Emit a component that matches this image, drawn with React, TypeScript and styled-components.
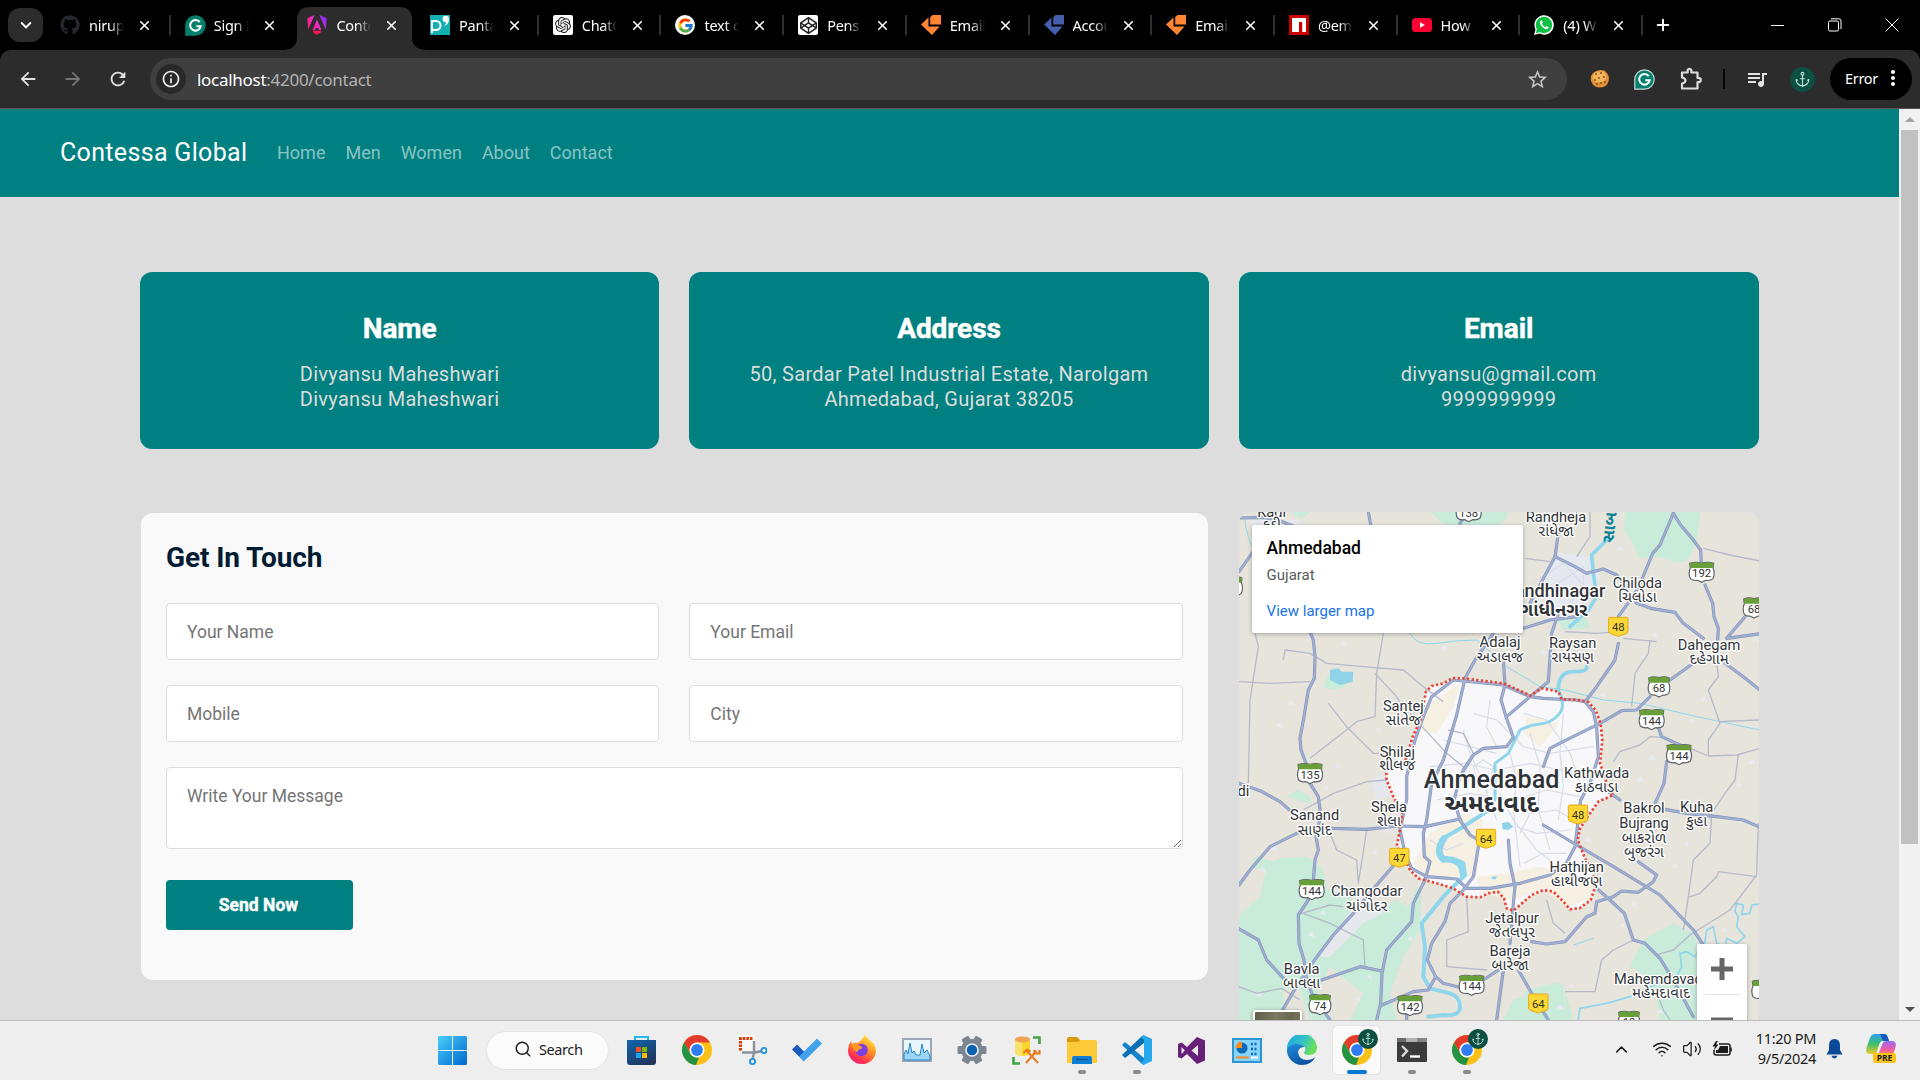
import React from "react";
import styled, { createGlobalStyle, css } from "styled-components";
import { FaGithub, FaWhatsapp, FaCodepen } from "react-icons/fa";
import { FcGoogle } from "react-icons/fc";
import { SiOpenai } from "react-icons/si";
import {
  MdArrowBack,
  MdArrowForward,
  MdRefresh,
  MdStarBorder,
  MdQueueMusic,
  MdInfoOutline,
  MdMoreVert,
  MdKeyboardArrowDown,
} from "react-icons/md";
import { Anchor, ChevronUp, Search, Volume2, Wifi, Plus, X } from "lucide-react";

const UI = `"Noto Sans", "Open Sans", sans-serif`;
const BODY = `Roboto, "Liberation Sans", sans-serif`;

const GlobalStyle = createGlobalStyle`
  *, *::before, *::after { box-sizing: border-box; }
  html, body { margin: 0; padding: 0; overflow: hidden; background: #000; }
  body { font-family: ${BODY}; }
  h1, h2, p { margin: 0; }
  svg { display: block; flex: none; }
`;

const Screen = styled.div`
  width: 1920px;
  height: 1080px;
  display: flex;
  flex-direction: column;
  overflow: hidden;
`;

/* ---------- browser tab strip ---------- */

const TabStrip = styled.div`
  height: 50px;
  flex: none;
  background: #000;
  display: flex;
  align-items: center;
  padding-left: 8px;
  color: #fff;
  font-family: ${UI};
`;

const TabSearch = styled.button`
  width: 35px;
  height: 34px;
  border: 0;
  padding: 0;
  border-radius: 12px;
  background: #2c2c2c;
  color: #fff;
  display: grid;
  place-items: center;
  margin-right: 6px;
`;

const TabBox = styled.div<{ $sep?: boolean }>`
  width: 122.7px;
  height: 50px;
  flex: none;
  display: flex;
  align-items: center;
  padding-left: 13px;
  position: relative;
  &:first-of-type {
    padding-left: 11px;
  }
  ${(p) =>
    p.$sep &&
    css`
      &::after {
        content: "";
        position: absolute;
        right: 1px;
        top: 15px;
        width: 2px;
        height: 20px;
        background: #303030;
      }
    `}
`;

const ActiveShape = styled.svg`
  position: absolute;
  left: -12px;
  top: 7px;
`;

const TabIcon = styled.span`
  width: 20px;
  height: 20px;
  flex: none;
  position: relative;
  display: grid;
  place-items: center;
`;

const TabTitle = styled.span`
  width: 35px;
  margin-left: 9px;
  margin-right: 13px;
  font-size: 14.5px;
  letter-spacing: -0.25px;
  white-space: nowrap;
  overflow: hidden;
  position: relative;
  mask-image: linear-gradient(90deg, #000 60%, transparent 100%);
`;

const TabClose = styled.span`
  position: relative;
  display: grid;
`;

const WindowButtons = styled.div`
  margin-left: auto;
  display: flex;
`;

const WindowButton = styled.span`
  width: 57px;
  height: 50px;
  display: grid;
  place-items: center;
`;

const NewTab = styled.span`
  margin-left: 10px;
`;

/* ---------- toolbar ---------- */

const ToolbarWrap = styled.div`
  background: #000;
  height: 59px;
  flex: none;
`;

const Toolbar = styled.div`
  height: 59px;
  background: #2c2c2c;
  border-radius: 11px 11px 0 0;
  border-bottom: 1px solid #565656;
  display: flex;
  align-items: center;
  font-family: ${UI};
  color: #e3e3e3;
`;

const NavButtons = styled.div`
  width: 150px;
  padding-left: 17px;
  display: flex;
  gap: 23px;
`;

const Omnibox = styled.div`
  width: 1417px;
  height: 42px;
  border-radius: 21px;
  background: #3f3f3f;
  display: flex;
  align-items: center;
  padding: 0 18px 0 6px;
`;

const SiteInfo = styled.span`
  width: 30px;
  height: 30px;
  border-radius: 50%;
  background: #292929;
  display: grid;
  place-items: center;
  color: #f1f1f1;
`;

const Url = styled.span`
  flex: 1;
  margin-left: 11px;
  font-size: 17px;
  letter-spacing: -0.28px;
  color: #b4b4b4;
  b { font-weight: 400; color: #fff; }
`;

const Extensions = styled.div`
  margin-left: 23px;
  display: flex;
  align-items: center;
`;

const ExtSlot = styled.span<{ $gap: number }>`
  margin-right: ${(p) => p.$gap}px;
`;

const Divider = styled.span`
  width: 2px;
  height: 20px;
  margin-right: 20px;
  background: #050505;
`;

const Avatar = styled.span<{ $size: number }>`
  width: ${(p) => p.$size}px;
  height: ${(p) => p.$size}px;
  border-radius: 50%;
  background: #0d4f42;
  color: #b9e2d8;
  display: grid;
  place-items: center;
`;

const ErrorChip = styled.div`
  margin-left: auto;
  margin-right: 8px;
  width: 82px;
  height: 42px;
  border-radius: 21px;
  background: #000;
  color: #fff;
  font-size: 14.5px;
  letter-spacing: -0.3px;
  display: flex;
  align-items: center;
  justify-content: space-between;
  padding: 0 7px 2px 15px;
`;

/* ---------- page ---------- */

const Viewport = styled.div`
  height: 911px;
  flex: none;
  display: flex;
  overflow: hidden;
`;

const Page = styled.div`
  width: 1899px;
  background: #ddd;
  overflow: hidden;
`;

const Navbar = styled.nav`
  height: 88px;
  background: #008080;
  display: flex;
  align-items: center;
  padding: 0 0 2px 60px;
`;

const Brand = styled.span`
  color: #fff;
  font-size: 25px;
  width: 217px;
  letter-spacing: 0.33px;
`;

const NavLink = styled.a`
  color: rgba(255, 255, 255, 0.55);
  font-size: 18px;
  margin-right: 20px;
`;

const Content = styled.main`
  padding: 75px 140px 0 140px;
  display: grid;
  grid-template-columns: 519.3px 519.3px 520px;
  column-gap: 30px;
  row-gap: 63px;
`;

const InfoCard = styled.section`
  height: 177px;
  border-radius: 12px;
  background: #008080;
  color: #ddd;
  text-align: center;
  padding-top: 39px;
  font-size: 20px;
  line-height: 25px;
  letter-spacing: 0.3px;
`;

const CardTitle = styled.h2`
  color: #fff;
  font-size: 28px;
  line-height: 36px;
  font-weight: 700;
  letter-spacing: -0.1px;
  -webkit-text-stroke: 0.5px #fff;
  margin-bottom: 15px;
`;

const FormCard = styled.form`
  grid-column: span 2;
  margin: 1px 1px 0 1px;
  height: 467px;
  border-radius: 12px;
  background: #f9f9f9;
  padding: 26px 25px 0;
`;

const FormTitle = styled.h1`
  color: #011b33;
  font-size: 28px;
  line-height: 38px;
  font-weight: 700;
  letter-spacing: -0.1px;
  margin-bottom: 26px;
`;

const Fields = styled.div`
  display: grid;
  grid-template-columns: 1fr 1fr;
  gap: 25px 30px;
`;

const fieldStyle = css`
  width: 100%;
  border: 1px solid #ddd;
  border-radius: 4px;
  background: #fff;
  font-family: ${BODY};
  font-size: 17.5px;
  padding: 0 20px;
  outline: none;
  &::placeholder { color: #757575; opacity: 1; }
`;

const Input = styled.input`
  ${fieldStyle}
  height: 57px;
`;

const Textarea = styled.textarea`
  ${fieldStyle}
  grid-column: span 2;
  display: block;
  height: 82px;
  padding: 17px 20px;
  line-height: 22px;
`;

const SendButton = styled.button`
  margin-top: 31px;
  width: 187px;
  height: 50px;
  border: 0;
  border-radius: 4px;
  background: #008080;
  color: #fff;
  font-family: ${BODY};
  font-size: 17.5px;
  font-weight: 700;
  -webkit-text-stroke: 0.4px #fff;
  padding: 0 8px 0 6px;
`;

/* ---------- scrollbar ---------- */

const Scrollbar = styled.div`
  width: 21px;
  background: #f1f1f1;
  display: flex;
  flex-direction: column;
  align-items: center;
  justify-content: space-between;
`;

const ScrollThumb = styled.div`
  width: 17px;
  height: 714px;
  background: #c1c1c1;
  margin-bottom: auto;
`;

const ScrollArrow = styled.div<{ $up?: boolean }>`
  width: 21px;
  height: 21px;
  display: grid;
  place-items: center;
  &::before {
    content: "";
    border: 5px solid transparent;
    ${(p) =>
      p.$up
        ? "border-bottom-color:#a3a3a3;border-top:0;"
        : "border-top-color:#505050;border-bottom:0;"}
  }
`;

/* ---------- map ---------- */

const MapFrame = styled.section`
  height: 563px;
  border-radius: 12px;
  overflow: hidden;
  position: relative;
  background: #e7e4dc;
`;

const PlaceCard = styled.div`
  position: absolute;
  left: 13px;
  top: 13px;
  width: 271px;
  height: 108px;
  border-radius: 2px;
  background: #fff;
  box-shadow: 0 1px 4px rgba(0, 0, 0, 0.3);
  padding: 13px 15px;
  display: flex;
  flex-direction: column;
`;

const PlaceName = styled.span`
  font-size: 17.5px;
  line-height: 21px;
  font-weight: 500;
  color: #000;
`;

const PlaceRegion = styled.span`
  font-size: 15px;
  line-height: 18px;
  margin-top: 7px;
  color: #5b5b5b;
`;

const PlaceLink = styled.a`
  font-size: 15px;
  line-height: 18px;
  margin-top: 18px;
  color: #1a73e8;
`;

const ZoomControl = styled.div`
  position: absolute;
  left: 458px;
  top: 432px;
  width: 50px;
  height: 101px;
  border-radius: 2px;
  background: #fff;
  box-shadow: 0 1px 4px rgba(0, 0, 0, 0.3);
  display: grid;
  grid-template-rows: 50px 1px 50px;
  place-items: center;
`;

const ZoomRule = styled.span`
  width: 37px;
  height: 1px;
  background: #e6e6e6;
`;

const SatelliteThumb = styled.div`
  position: absolute;
  left: 14px;
  top: 498px;
  width: 49px;
  height: 49px;
  border: 2px solid #fff;
  border-radius: 3px;
  background: linear-gradient(100deg, #5e5f49, #7b7862 40%, #6a6a50 70%, #7d795f);
  box-shadow: 0 1px 4px rgba(0, 0, 0, 0.4);
`;

/* ---------- taskbar ---------- */

const Taskbar = styled.footer`
  height: 60px;
  flex: none;
  background: #eee;
  border-top: 1px solid #bdbdbd;
  display: flex;
  align-items: center;
  padding: 0 0 1px 438px;
  font-family: ${UI};
  color: #1b1b1b;
`;

const SearchPill = styled.div`
  width: 123px;
  height: 39px;
  margin: 0 5px 0 19px;
  border: 1px solid #e4e4e4;
  border-radius: 20px;
  background: #fbfbfb;
  display: flex;
  align-items: center;
  padding: 0 0 2px 27px;
  gap: 7px;
  font-size: 14.5px;
  letter-spacing: -0.4px;
`;

const AppSlot = styled.div<{ $active?: boolean }>`
  width: 47px;
  height: 48px;
  margin: 0 4px;
  border-radius: 5px;
  display: grid;
  place-items: center;
  position: relative;
  background: ${(p) => (p.$active ? "#fafafa" : "transparent")};
  box-shadow: ${(p) => (p.$active ? "0 0 0 1px #e3e3e3" : "none")};
`;

const RunMark = styled.span<{ $active?: boolean }>`
  position: absolute;
  bottom: 0;
  left: 50%;
  width: ${(p) => (p.$active ? 20 : 8)}px;
  height: 4px;
  border-radius: 2px;
  transform: translateX(-50%);
  background: ${(p) => (p.$active ? "#0078d4" : "#8a8a8a")};
`;

const BadgeAvatar = styled.span`
  position: absolute;
  right: 2px;
  top: 3px;
`;

const Tray = styled.div`
  margin-left: auto;
  display: flex;
  align-items: center;
  padding: 0 24px 2px 0;
`;

const TrayIcons = styled.div`
  display: flex;
  align-items: center;
  gap: 10px;
  margin-left: 21px;
  margin-right: 17px;
`;

const Clock = styled.div`
  width: 67px;
  font-size: 14.5px;
  line-height: 20px;
  letter-spacing: -0.3px;
  white-space: nowrap;
  display: flex;
  flex-direction: column;
  align-items: flex-end;
  padding-bottom: 2px;
`;

const Bell = styled.span`
  margin: 0 23px 0 10px;
`;

/* ---------- drawn icons ---------- */

const AngularIcon = () => (
  <svg width="20" height="20" viewBox="0 0 20 20">
    <defs>
      <linearGradient id="ng" x1="0" y1="0.7" x2="1" y2="0.2">
        <stop offset="0" stopColor="#ff1f77" />
        <stop offset="0.5" stopColor="#f02bd5" />
        <stop offset="1" stopColor="#7a2bff" />
      </linearGradient>
    </defs>
    <path d="M12.4 0 19.6 3.3 18.9 14.4ZM7.6 0 .4 3.3 1.1 14.4ZM10 4.4 14.4 15H11.9L11.2 13H8.8L8.1 15H5.6Z" fill="url(#ng)" />
    <path d="M5.6 15.8H14.4L13.8 17.6 10 19.8 6.2 17.6Z" fill="#ff1857" />
  </svg>
);

const GrammarlyIcon = ({ outlined }: { outlined?: boolean }) => (
  <svg width="21" height="21" viewBox="0 0 21 21">
    <path d="M.8 20.2V10.5A9.7 9.7 0 1 1 10.5 20.2Z" fill="#04806c" stroke={outlined ? "#c9d8d5" : "#04806c"} strokeWidth="1.2" />
    <path d="M14.8 7.2A5.3 5.3 0 1 0 15.7 11.3H11.3" fill="none" stroke="#fff" strokeWidth="2" />
  </svg>
);

const PuzzleIcon = () => (
  <svg width="25" height="25" viewBox="0 0 25 25">
    <path
      d="M4 5.500H9.700Q9 1.800 11.500 1.800T13.300 5.500H19.500V11Q22.800 10.600 22.800 13T19.500 15V21.500H4V16.500Q7.400 15.800 7.400 13.500T4 10.500Z"
      fill="none"
      stroke="#dcdcdc"
      strokeWidth="2.200"
      strokeLinejoin="round"
    />
  </svg>
);

const PantaloonsIcon = () => (
  <svg width="20" height="20" viewBox="0 0 20 20">
    <rect width="20" height="20" fill="#12b0b3" />
    <path d="M2 18V6H6A4.4 4.4 0 0 1 6 15H2" fill="none" stroke="#fff" strokeWidth="2" />
    <circle cx="15.8" cy="4" r="3.2" fill="#fff" />
    <path d="M19 4Q19 9 14.6 11Q17 8 16 5Z" fill="#fff" />
  </svg>
);

const ArrowBlockIcon = ({ color }: { color: string }) => (
  <svg width="20" height="20" viewBox="0 0 20 20" fill={color}>
    <path d="M0 9.500 7.500 2.500V11.500H18.500L11 20Z" />
    <path d="M11.500 0H20V9.500H9.200V2.200Z" />
  </svg>
);

const NpmIcon = () => (
  <svg width="20" height="20" viewBox="0 0 20 20">
    <rect width="20" height="20" fill="#cb0000" />
    <path d="M3 3H17V17H13.2V7H10V17H3Z" fill="#fff" />
  </svg>
);

const WhiteTile = styled.span<{ $round?: boolean }>`
  width: 20px;
  height: 20px;
  border-radius: ${(p) => (p.$round ? "50%" : "2px")};
  background: #fff;
  color: #222;
  display: grid;
  place-items: center;
`;

const WhatsAppIcon = () => (
  <svg width="20" height="20" viewBox="0 0 20 20">
    <path d="M0 20 1.500 14.500A9.700 9.700 0 1 1 5.500 18.500Z" fill="#fff" />
    <path d="M1.800 18.200 2.900 14.200A8.200 8.200 0 1 1 5.900 17.100Z" fill="#10c043" />
    <path d="M7.300 5.300Q5.500 6 5.900 8.200 7.800 12.900 12.200 14.200 14.300 14.200 14.800 12.200L12.500 11 11.400 12.200Q8.900 11.100 8 8.800L8.900 7.700 8.100 5.400Z" fill="#fff" />
  </svg>
);

const YouTubeMark = () => (
  <svg width="20" height="20" viewBox="0 0 20 20">
    <rect y="3" width="20" height="14" rx="3.5" fill="#ff0033" />
    <path d="M8 7.2 13 10 8 12.8Z" fill="#fff" />
  </svg>
);

const CookieIcon = () => (
  <svg width="20" height="20" viewBox="0 0 20 20">
    <path d="M3 4Q9-1 15 2Q20 6 18.6 12Q17 18 10.5 18.6Q3 18.6 1 12Q0 7 3 4Z" fill="#e08f35" />
    <path d="M4 4Q9 1 14 3Q17 6 16 10Q12 15 5 13Q1 9 4 4Z" fill="#f2b45c" />
    {[[6, 5], [11, 4], [14, 8], [9, 9], [5, 11], [11, 14], [15, 13], [7, 15]].map(([x, y]) => (
      <circle key={`${x}-${y}`} cx={x} cy={y} r="0.9" fill="#7d4518" />
    ))}
  </svg>
);

const ChromeIcon = () => (
  <svg width="30" height="30" viewBox="0 0 30 30">
    <circle cx="15" cy="15" r="15" fill="#fbc116" />
    <path d="M15 0A15 15 0 0 1 28 7.5H15A7.5 7.5 0 0 0 8.5 18.7L2 7.5A15 15 0 0 1 15 0Z" fill="#e33b2e" />
    <path d="M2 7.5 8.5 18.8A7.5 7.5 0 0 0 17 22.2L14 30A15 15 0 0 1 2 7.5Z" fill="#229342" />
    <circle cx="15" cy="15" r="7.5" fill="#fff" />
    <circle cx="15" cy="15" r="5.9" fill="#2f7df0" />
  </svg>
);

const WindowsIcon = () => (
  <svg width="29" height="29" viewBox="0 0 29 29">
    <defs>
      <linearGradient id="win" x1="0" y1="0" x2="1" y2="1">
        <stop offset="0" stopColor="#48cffb" />
        <stop offset="1" stopColor="#0067ce" />
      </linearGradient>
    </defs>
    <path d="M1 0H14V14H0V1ZM15 0H28L29 1V14H15ZM0 15H14V29H1L0 28ZM15 15H29V28L28 29H15Z" fill="url(#win)" />
  </svg>
);

const StoreIcon = () => (
  <svg width="29" height="29" viewBox="0 0 29 29">
    <defs>
      <linearGradient id="store" x1="0" y1="0" x2="0.6" y2="1">
        <stop offset="0" stopColor="#0f66ad" />
        <stop offset="1" stopColor="#21365f" />
      </linearGradient>
    </defs>
    <path d="M8 6V1H21V6" fill="none" stroke="#22b8ee" strokeWidth="2" />
    <path d="M0 4H29V26Q29 29 26 29H3Q0 29 0 26Z" fill="url(#store)" />
    <path d="M9 11H14V16H9Z" fill="#f25022" />
    <path d="M15 11H20V16H15Z" fill="#7fba00" />
    <path d="M9 17H14V22H9Z" fill="#19a5f0" />
    <path d="M15 17H20V22H15Z" fill="#ffb900" />
  </svg>
);

const SnipIcon = () => (
  <svg width="30" height="30" viewBox="0 0 30 30" fill="none">
    <path d="M0 0H18V18H4Z" fill="#f8f8f8" />
    <path d="M15.500 3.500H3.500V15.500" stroke="#d83b01" strokeWidth="3" strokeDasharray="2.6 1" />
    <path d="M17 6V18L15.500 24M5 17.500H18L25 16" stroke="#8b9299" strokeWidth="2.4" />
    <circle cx="27" cy="15.5" r="2.6" stroke="#1b93e0" strokeWidth="1.8" />
    <circle cx="15.5" cy="26.5" r="2.6" stroke="#1b93e0" strokeWidth="1.8" />
  </svg>
);

const TodoIcon = () => (
  <svg width="30" height="30" viewBox="0 0 30 30">
    <path d="M0 14.5 5 9.5 13 17.5 11.5 26Z" fill="#185abd" />
    <path d="M7 21.5 25 3.5 30 8.5 11.8 26.5Z" fill="#41a2ec" />
  </svg>
);

const FirefoxIcon = () => (
  <svg width="30" height="30" viewBox="0 0 30 30">
    <defs>
      <linearGradient id="ff" x1="0.8" y1="0" x2="0.2" y2="1">
        <stop offset="0" stopColor="#fff14a" />
        <stop offset="0.45" stopColor="#ff8a1f" />
        <stop offset="0.8" stopColor="#ff2f55" />
        <stop offset="1" stopColor="#e81f8d" />
      </linearGradient>
    </defs>
    <path d="M18 0Q21 4 25 7L27 9Q29 13 29 16A14 13.5 0 1 1 1 15Q1 10 4 6L5 9Q8 7 11 8Q15 5 18 0Z" fill="url(#ff)" />
    <circle cx="14.5" cy="15" r="6.2" fill="#7a3fe0" />
    <path d="M4 10Q9 7 13 11Q17 12 14 14Q10 14 11 17Q7 17 4 10Z" fill="#ff9a1f" />
  </svg>
);

const MonitorIcon = () => (
  <svg width="30" height="24" viewBox="0 0 30 24">
    <rect x="1" y="1" width="28" height="22" fill="#eaf5fc" stroke="#9aa9b5" strokeWidth="2" />
    <path d="M2 16 4 12 6 16 8 5 10 15 12 13 14 17 18 17 20 6 22 15 25 12 28 18V22H2Z" fill="#9bd5f7" stroke="#2b86c5" />
  </svg>
);

const GearIcon = () => (
  <svg width="30" height="30" viewBox="0 0 30 30">
    <g fill="#7c8690">
      <circle cx="15" cy="15" r="11" />
      {[0, 60, 120, 180, 240, 300].map((a) => (
        <rect key={a} x="11" y="0.5" width="8" height="7" rx="1.5" transform={`rotate(${a + 30} 15 15)`} />
      ))}
    </g>
    <circle cx="15" cy="15" r="6.8" fill="#e9eef2" />
    <circle cx="15" cy="15" r="5.2" fill="#0b62b2" />
  </svg>
);

const DbToolIcon = () => (
  <svg width="29" height="29" viewBox="0 0 29 29" fill="none">
    <path d="M3 3H18V18Q11 22 3 18Z" fill="#fbd52b" />
    <path d="M3 3H10V20Q5 20 3 18Z" fill="#f9e36e" />
    <ellipse cx="10.5" cy="3.4" rx="7.5" ry="3" fill="#efa354" />
    <path d="M21 1.5H27.5V8M1.5 21V27.5H8" stroke="#42a547" strokeWidth="2.6" />
    <path d="M14 27 24.500 15M26 27 15 15" stroke="#ea7a1c" strokeWidth="2" />
    <path d="M11.500 17 15 13.500 18.500 15.500M22.500 14V17.500H27.500V14" stroke="#ea7a1c" strokeWidth="2.2" />
  </svg>
);

const FolderIcon = () => (
  <svg width="30" height="27" viewBox="0 0 30 27">
    <path d="M0 2Q0 0 2 0H10L13 3V8H0Z" fill="#dc9a0a" />
    <path d="M0 5H11L14 3H28Q30 3 30 5V26H0Z" fill="#ffca3a" />
    <path d="M5 27V21Q5 19 7 19H23Q25 19 25 21V27Z" fill="#0f7fd4" />
    <path d="M9 22.5H21" stroke="#0a559c" strokeWidth="1.5" />
  </svg>
);

const VsCodeIcon = () => (
  <svg width="30" height="30" viewBox="0 0 30 30">
    <path d="M0 10 3 7 22 23V30L19 28Z" fill="#1183cd" />
    <path d="M0 20 3 23 22 8V0L19 2Z" fill="#0a6fb5" />
    <path d="M21.5 0 30 4V26L21.5 30 19 28 22 25V5L19 2Z" fill="#27a9f0" />
  </svg>
);

const VisualStudioIcon = () => (
  <svg width="27" height="27" viewBox="0 0 27 27" fill="#68217a">
    <path fillRule="evenodd" d="M19 0 27 3.5V23.5L19 27 9 17 3.5 21.5 0 20V7L3.5 5.5 9 10ZM20 8 13.5 13.5 20 19ZM3.5 10V17L6.8 13.5Z" />
  </svg>
);

const ControlPanelIcon = () => (
  <svg width="30" height="25" viewBox="0 0 30 25">
    <rect x="1" y="1" width="28" height="23" fill="#86d3fb" stroke="#2d95cf" strokeWidth="2" />
    <circle cx="10" cy="10" r="5.6" fill="#0f6cbd" />
    <path d="M10 10V3.5A6.5 6.5 0 0 0 3.5 10Z" fill="#f58a1f" />
    <path d="M19 6H25M19 11H25M19 16H25" stroke="#0f6cbd" strokeWidth="2.4" strokeDasharray="2 1.5" />
    <path d="M4 19.5H17" stroke="#f58a1f" strokeWidth="2" />
    <path d="M19 19.5H26" stroke="#fff" strokeWidth="2" />
  </svg>
);

const EdgeIcon = () => (
  <svg width="30" height="30" viewBox="0 0 30 30">
    <defs>
      <linearGradient id="edgeTop" x1="0" y1="0" x2="1" y2="0.4">
        <stop offset="0" stopColor="#1fa4e6" />
        <stop offset="0.6" stopColor="#34c3c4" />
        <stop offset="1" stopColor="#6ae05a" />
      </linearGradient>
      <linearGradient id="edgeBottom" x1="0" y1="0" x2="0.6" y2="1">
        <stop offset="0" stopColor="#1c8fdd" />
        <stop offset="1" stopColor="#0d4fa0" />
      </linearGradient>
    </defs>
    <path d="M0 14A15 15 0 0 1 30 13Q30 20 22 20Q17 20 17 17.5Q19 15 18 12.5Q15 9 10 9Q3 9 0 14Z" fill="url(#edgeTop)" />
    <path d="M0 14Q3 8.5 10 9Q15 9 17.5 12Q12 12 11 17Q12 25 20 25Q25 25 28.5 22Q24 30 15 30A15 15 0 0 1 0 14Z" fill="url(#edgeBottom)" />
  </svg>
);

const TerminalIcon = () => (
  <svg width="30" height="24" viewBox="0 0 30 24" fill="none">
    <rect width="30" height="24" rx="1" fill="#3b3b3b" />
    <path d="M0 4V1L1 0H9V4Z" fill="#6a6a6a" />
    <path d="M9 0H20V4H9Z" fill="#b0b0b0" />
    <path d="M20 0H30V4H20Z" fill="#868686" />
    <path d="M5 8 10 13 5 18.5" stroke="#ddd" strokeWidth="2.4" />
    <path d="M13 18.5H23" stroke="#fff" strokeWidth="2.4" />
  </svg>
);

const BatteryIcon = () => (
  <svg width="20" height="16" viewBox="0 0 20 16">
    <path d="M7 3H16Q18 3 18 5V12Q18 14 16 14H4Q2 14 2 12V9" fill="none" stroke="#1b1b1b" strokeWidth="1.5" />
    <path d="M8 5H16V12H4V9H6Z" fill="#1b1b1b" />
    <path d="M19 6.5V10.5" stroke="#1b1b1b" strokeWidth="1.6" />
    <path d="M4 0 .5 5.5H3L1.8 9.5 6.5 3.6H4L6 0Z" fill="#1b1b1b" />
  </svg>
);

const BellIcon = () => (
  <svg width="17" height="20" viewBox="0 0 17 20" fill="#0b4a99">
    <path d="M8.5 0Q14 .4 14 6.5V11L16.5 15.5H.5L3 11V6.5Q3 .4 8.5 0Z" />
    <path d="M5.5 16.8H11.5Q10.8 19.4 8.5 19.4Q6.2 19.4 5.5 16.8Z" />
  </svg>
);

const CopilotWrap = styled.div`
  position: relative;
  width: 30px;
  height: 30px;
`;

const PreTag = styled.span`
  position: absolute;
  left: 7px;
  top: 19px;
  width: 23px;
  height: 10px;
  border-radius: 2px;
  background: #fcc419;
  font: 700 8.5px/10px ${UI};
  text-align: center;
  color: #222;
`;

const CopilotIcon = () => (
  <CopilotWrap>
    <svg width="30" height="28" viewBox="0 0 30 28">
      <defs>
        <linearGradient id="copA" x1="0" y1="0" x2="0" y2="1">
          <stop offset="0" stopColor="#2b9ff0" />
          <stop offset="0.5" stopColor="#3ec06b" />
          <stop offset="1" stopColor="#f4c82e" />
        </linearGradient>
        <linearGradient id="copB" x1="0" y1="0" x2="0" y2="1">
          <stop offset="0" stopColor="#9a6cf2" />
          <stop offset="0.6" stopColor="#ee5aa8" />
          <stop offset="1" stopColor="#fb8b4d" />
        </linearGradient>
      </defs>
      <path d="M9 0H18Q21 0 22 4L23 7H17Q14 7 13 11L10 20H4Q-1 20 .5 14L4 4Q5.500 0 9 0Z" fill="url(#copA)" />
      <path d="M18 0Q21 0 22 4L23 7H17L14 0Z" fill="#1558c0" />
      <path d="M21 7H26Q31 7 29.500 13L27 21H12L16 11Q17 7 21 7Z" fill="url(#copB)" />
    </svg>
    <PreTag>PRE</PreTag>
  </CopilotWrap>
);

/* ---------- data ---------- */

const tabs: { title: string; icon: React.ReactNode; active?: boolean; noSep?: boolean }[] = [
  { title: "nirupa", icon: <FaGithub size={20} color="#24292e" /> },
  { title: "Sign I", icon: <GrammarlyIcon />, noSep: true },
  { title: "Conte", icon: <AngularIcon />, active: true, noSep: true },
  { title: "Panta", icon: <PantaloonsIcon /> },
  { title: "ChatG", icon: <WhiteTile><SiOpenai size={16} /></WhiteTile> },
  { title: "text c", icon: <WhiteTile $round><FcGoogle size={17} /></WhiteTile> },
  { title: "Pens", icon: <WhiteTile><FaCodepen size={17} /></WhiteTile> },
  { title: "Email", icon: <ArrowBlockIcon color="#ff8534" /> },
  { title: "Accou", icon: <ArrowBlockIcon color="#4460ad" /> },
  { title: "Email", icon: <ArrowBlockIcon color="#ff8534" /> },
  { title: "@em", icon: <NpmIcon /> },
  { title: "How", icon: <YouTubeMark /> },
  { title: "(4) W", icon: <WhatsAppIcon /> },
];

const cards = [
  { title: "Name", lines: ["Divyansu Maheshwari", "Divyansu Maheshwari"] },
  { title: "Address", lines: ["50, Sardar Patel Industrial Estate, Narolgam", "Ahmedabad, Gujarat 38205"] },
  { title: "Email", lines: ["divyansu@gmail.com", "9999999999"] },
];

const ProfileBadge = () => (
  <Avatar $size={20}>
    <Anchor size={14} strokeWidth={1.6} />
  </Avatar>
);

const apps: { icon: React.ReactNode; run?: boolean; active?: boolean; badge?: boolean }[] = [
  { icon: <StoreIcon /> },
  { icon: <ChromeIcon /> },
  { icon: <SnipIcon /> },
  { icon: <TodoIcon /> },
  { icon: <FirefoxIcon /> },
  { icon: <MonitorIcon /> },
  { icon: <GearIcon /> },
  { icon: <DbToolIcon /> },
  { icon: <FolderIcon />, run: true },
  { icon: <VsCodeIcon />, run: true },
  { icon: <VisualStudioIcon /> },
  { icon: <ControlPanelIcon /> },
  { icon: <EdgeIcon /> },
  { icon: <ChromeIcon />, run: true, active: true, badge: true },
  { icon: <TerminalIcon />, run: true },
  { icon: <ChromeIcon />, run: true, badge: true },
];

/* Map geometry is in thirds of a pixel. */
const majorRoads = [
  "27,54 100,52 150,62 230,95",
  "27,215 80,140",
  "415,36 425,90",
  "240,395 250,420 255,470 253,535 235,570 222,650 210,715 213,750 230,795 240,850 265,890 270,930 268,965 258,1010 265,1050 255,1080 250,1140",
  "235,1200 205,1245 207,1330 222,1380 228,1430 245,1480 300,1560",
  "27,1155 60,1110 120,1040 200,1000 255,982 310,985 410,988 500,978 585,980 690,957",
  "27,850 90,872 150,905 190,940",
  "490,1097 440,1155 370,1240 310,1305 250,1385 190,1475 155,1535",
  "710,36 690,70",
  "790,400 735,480 705,535 680,645 640,780 605,850 590,960 580,1000 583,1070 600,1085 585,1140 550,1210 545,1265 470,1350 456,1420 452,1510 440,1560",
  "720,780 690,830 680,870 672,900 690,960 720,1005 745,1020",
  "605,590 670,540 820,555 900,590 940,595 1035,600 1065,605 1090,635 1100,680 1105,770 1080,850 1052,900 1035,1040 1010,1088 960,1125 870,1150 780,1165 710,1165 680,1137 590,1130 545,1105 525,1060 510,990 530,900 530,830 555,720 580,650 605,590",
  "820,480 825,555 813,600 828,650 850,712 830,740 760,745 730,765 700,810",
  "1165,430 1155,480 1100,560 1065,605",
  "985,100 975,170 935,245 900,310",
  "975,170 1035,200 1070,220 1120,207 1160,225 1220,310 1262,325 1335,337 1360,370 1420,415",
  "1330,40 1290,135 1268,160 1235,240 1215,280 1165,350",
  "1330,40 1352,75 1390,120 1412,150 1414,190",
  "1425,255 1448,310 1452,350 1465,385 1463,420",
  "1600,400 1490,415 1545,350",
  "1485,490 1540,530 1590,570",
  "1390,490 1320,540",
  "1260,590 1220,630 1175,632 1110,670 1005,722 960,745 940,800",
  "830,650 900,590 955,545 965,400 985,340",
  "880,385 960,360 1040,350",
  "1280,670 1295,710 1350,735 1380,750",
  "1310,785 1302,850 1275,910",
  "1305,928 1370,940 1460,950 1540,960 1590,982",
  "1135,875 1170,900",
  "940,975 1040,1035 1150,1100 1290,1185 1390,1290 1420,1335",
  "1100,1165 1140,1200 1183,1240 1210,1320 1245,1330 1290,1375 1330,1440 1390,1550",
  "905,1325 950,1332 1005,1325 1070,1250 1095,1240 1100,1205 1150,1190 1175,1173 1225,1177 1270,1145 1280,1125 1225,1085",
  "835,1020 840,1090 855,1160 850,1210 840,1330",
  "745,1040 730,1130 700,1170 660,1210 645,1265 605,1330 592,1380 617,1430 640,1450 700,1465",
  "27,1287 85,1320 110,1380 165,1440",
  "275,1440 390,1400 456,1413",
  "456,1515 550,1475 595,1470 617,1430",
  "820,1410 800,1560",
  "865,1410 905,1480 955,1560",
  "760,1440 820,1400",
  "530,1560 530,1540",
];

const minorRoads = [
  "75,400 85,440 60,600 55,850",
  "27,545 120,550 240,545",
  "160,480 165,450 240,460 290,490 400,500 520,510 580,560 640,605",
  "460,400 440,520 435,650 380,665 330,705 240,775",
  "295,610 350,680 430,760 480,760",
  "435,520 500,590 530,640",
  "220,930 310,880 410,845 470,840",
  "300,1000 320,1050 380,1080 385,1150 410,990",
  "215,1240 300,1215 340,1220",
  "220,1240 300,1270 400,1320 405,1400",
  "27,1460 80,1480 155,1465 210,1500",
  "710,1190 715,1295 650,1320 650,1400 770,1410",
  "885,175 960,185",
  "1080,36 1080,110 1040,170",
  "1420,145 1500,165 1590,183",
  "1260,420 1255,460 1215,520 1205,620",
  "1460,490 1465,530 1435,570 1470,670 1435,720 1435,765",
  "1465,665 1590,660",
  "1380,745 1435,768 1520,765 1590,745",
  "1525,765 1515,840 1485,880 1445,940 1440,1030 1390,1080 1375,1190 1360,1290",
  "1585,970 1580,1125 1500,1230 1380,1305 1330,1350 1285,1363",
  "1580,1130 1465,1115 1460,1130 1410,1180 1375,1192",
  "1210,1320 1150,1350 1115,1380 1095,1475 1005,1475",
  "540,640 650,760 700,800",
  "1180,415 1280,425",
  "655,690 700,700 730,760",
  "1150,785 1170,755 1230,735 1260,710 1295,712",
  "1005,395 1100,400 1165,395",
  "1285,1490 1300,1530 1320,1560",
  "950,1200 970,1270 1005,1300",
];

const streets = [
  "600,800 700,790 800,810 900,790 1080,830",
  "620,900 720,880 850,900 950,870 1050,890",
  "700,690 720,760 760,850 800,960",
  "840,760 860,840 850,930 870,1100",
  "900,700 930,800 925,930 960,1050",
  "1000,640 990,760 1000,860 985,960",
  "600,1020 650,1050 700,1030",
  "730,640 800,660 880,740 960,760 1090,740",
  "640,720 720,740 800,760",
  "880,640 950,660 1020,760 1050,850",
  "860,980 920,1000 1020,990",
  "880,1090 940,1060 1010,1060",
  "730,800 760,780 790,800 780,840 740,840 730,800",
  "810,880 850,960 920,1050 960,1080",
  "840,820 940,830 1010,800",
  "870,1000 900,940 980,930 1030,960",
  "780,600 770,680 800,740",
  "940,280 1060,200 1060,330",
  "910,250 1000,190 1065,260 990,340",
];

const labels: [string, number, number, number, number][] = [
  ["Kadi", 125, 52, 44, 400],
  ["કડી", 125, 90, 45, 400],
  ["Randheja", 978, 67, 44, 400],
  ["રાંધેજા", 978, 109, 45, 400],
  ["Gandhinagar", 972, 292, 54, 500],
  ["ગાંધીનગર", 972, 347, 54, 700],
  ["Adalaj", 810, 442, 44, 400],
  ["અડાલજ", 810, 485, 45, 400],
  ["Raysan", 1028, 443, 44, 400],
  ["રાયસણ", 1028, 487, 45, 400],
  ["Santej", 520, 633, 44, 400],
  ["સાંતેજ", 520, 676, 45, 400],
  ["Shilaj", 502, 770, 44, 400],
  ["શીલજ", 502, 811, 45, 400],
  ["Chiloda", 1222, 264, 44, 400],
  ["ચિલોડા", 1222, 307, 45, 400],
  ["Dahegam", 1437, 450, 44, 400],
  ["દહેગામ", 1437, 493, 45, 400],
  ["Ahmedabad", 785, 864, 75.5, 500],
  ["અમદાવાદ", 785, 937, 75, 700],
  ["Kathwada", 1100, 833, 44, 400],
  ["કાઠવાડા", 1100, 876, 45, 400],
  ["di", 40, 888, 44, 400],
  ["Sanand", 254, 960, 44, 400],
  ["સાણંદ", 254, 1004, 45, 400],
  ["Shela", 477, 935, 44, 400],
  ["શેલા", 477, 979, 45, 400],
  ["Changodar", 410, 1188, 44, 400],
  ["ચાંગોદર", 410, 1233, 45, 400],
  ["Bavla", 215, 1422, 44, 400],
  ["બાવલા", 215, 1464, 45, 400],
  ["Jetalpur", 846, 1270, 44, 400],
  ["જેતલપુર", 846, 1310, 45, 400],
  ["Bareja", 840, 1367, 44, 400],
  ["બારેજા", 840, 1410, 45, 400],
  ["Hathijan", 1040, 1116, 44, 400],
  ["હાથીજણ", 1040, 1159, 45, 400],
  ["Bakrol", 1242, 938, 44, 400],
  ["Bujrang", 1242, 984, 44, 400],
  ["બાકરોળ", 1242, 1028, 45, 400],
  ["બુજરંગ", 1242, 1072, 45, 400],
  ["Kuha", 1400, 935, 44, 400],
  ["કુહા", 1400, 977, 45, 400],
  ["Mahemdavad", 1285, 1453, 44, 400],
  ["મહેમદાવાદ", 1293, 1495, 45, 400],
];

const stateShields: [string, number, number][] = [
  ["138", 716, 36],
  ["135", 240, 822],
  ["144", 245, 1170],
  ["74", 270, 1515],
  ["142", 540, 1518],
  ["144", 725, 1457],
  ["192", 1415, 218],
  ["68", 1572, 325],
  ["68", 1287, 562],
  ["144", 1265, 660],
  ["144", 1347, 765],
  ["10", 1197, 1565],
  ["6", 1598, 1472],
  ["5", 5, 262],
];

const nationalShields: [string, number, number][] = [
  ["48", 1165, 380],
  ["64", 768, 1016],
  ["47", 508, 1073],
  ["64", 925, 1510],
  ["48", 1044, 943],
];

const flecks = Array.from({ length: 70 }, (_, i) => {
  const x = 40 + ((i * 397) % 1540);
  const y = 50 + ((i * 641) % 1500);
  return `M${x} ${y}l${8 + (i % 9)} ${-10 - (i % 7)} ${6 + (i % 5)} ${14 + (i % 6)}z`;
}).join("");

const boundary =
  "M527 780 550 705 570 665 588 575 605 558 640 550 668 534 700 535 820 550 865 570 900 587 935 565 985 575 995 598 1040 599 1075 606 1097 630 1112 672 1117 720 1110 790 1130 850 1150 885 1105 905 1080 940 1050 985 1043 1020 1065 1075 1088 1115 1094 1165 1082 1200 1050 1224 1020 1228 1000 1205 970 1175 940 1170 905 1185 870 1215 850 1232 830 1225 822 1195 803 1175 775 1180 750 1192 710 1190 670 1165 620 1150 565 1135 540 1110 525 1075 500 1040 510 990 517 940 490 890 470 840 468 800Z";

const CityMap = () => (
  <svg width="520" height="508" viewBox="27 36 1560 1524" fontFamily='Roboto, "Noto Sans Gujarati", "Noto Sans", sans-serif'>
    <rect x="27" y="36" width="1560" height="1524" fill="#e7e4dc" />
    <g fill="#c9ebda">
      <path d="M1185 36H1410L1400 120 1375 180 1340 188 1290 170 1225 175 1210 130 1180 90Z" />
      <path d="M600 36H835L830 55 780 90 700 100 640 70Z" />
      <path d="M185 36H240L215 58Z" />
      <path d="M27 1245 90 1190 110 1100 150 1075 230 1070 280 1110 290 1170 350 1180 390 1230 440 1240 500 1200 535 1220 560 1160 580 1200 575 1290 600 1400 590 1560 27 1560Z" />
      <path d="M1200 1400 1240 1320 1330 1270 1385 1300 1410 1340 1420 1560 1290 1560 1270 1440Z" />
      <path d="M800 1560 840 1500 880 1490 900 1430 1000 1455 1005 1560Z" />
      <path d="M280 560 300 515 365 520 345 560 310 570Z" />
      <path d="M170 890 200 870 240 890 245 910 220 905Z" />
      <path d="M980 360 1070 355 1080 385 1000 390Z" />
      <path d="M75 1070 140 1085 130 1115 60 1100Z" />
      <path d="M1005 1470V1560H1030Z" />
    </g>
    <path d="M560 1150 575 1190 570 1290 520 1370 480 1480 500 1560H820L860 1480 1005 1440 1000 1240 700 1180Z" fill="#e7e4dc" />
    <path d="M300 1400 400 1480 360 1560H300L255 1500ZM160 1465 210 1470 240 1560H160Z" fill="#e7e4dc" />
    <path d="M940 220 990 160 1080 170 1110 230 1060 330 980 350 925 310Z" fill="#e6e8ef" />
    <path d="M60 60 220 60 200 100 80 100ZM420 840 470 820 500 880 440 900ZM380 1210 430 1200 460 1240 400 1270 300 1370 260 1370Z" fill="#e6e8ee" />
    <path d={flecks} fill="#e8eaf1" />
    <path d={boundary} fill="#f8f8fa" />
    <path d="M600 610 690 550 670 620 620 700 570 690ZM890 650 990 670 930 740 880 700ZM700 940 760 960 740 1130 590 1130 550 1090 600 1000ZM740 1130 830 1120 930 1100 1090 1140 1080 1200 1010 1220 940 1165 850 1200 750 1180Z" fill="#f6f0e3" />
    <g fill="none" stroke="#d9dce6" strokeWidth="3.500">
      {streets.map((p) => (
        <polyline key={p} points={p} />
      ))}
    </g>
    <g fill="none" stroke="#8fd6ec" strokeLinejoin="round" strokeLinecap="round">
      <path d="M540 400Q560 440 620 430T740 420L830 500 930 560 1005 570 1120 600 1230 610 1400 650 1590 690M45 60Q50 110 70 150" strokeWidth="3" />
      <path d="M1130 120 1085 165 1090 220 1100 290 1075 330 1020 380M985 570Q985 515 1030 515T1070 500" strokeWidth="11" />
      <path d="M985 570Q1010 620 985 645T930 672T870 690L835 760 795 790 795 900" strokeWidth="9" />
      <path d="M770 935 700 980 640 1015Q610 1050 640 1078Q675 1075 700 1090L705 1125 640 1190 575 1270 585 1340 580 1430 600 1465 660 1480Q690 1490 690 1520T640 1545L595 1550" strokeWidth="12" />
      <path d="M642 1015Q615 1055 640 1078Q680 1075 695 1100L700 1125" strokeWidth="20" />
      <path
        d="M1590 1212 1565 1215 1560 1240 1535 1243 1540 1215 1520 1210 1515 1235 1525 1250 1520 1280 1545 1310 1520 1330 1490 1315 1485 1345 1460 1330 1450 1280 1430 1290 1425 1325 1395 1370 1370 1355 1350 1360 1355 1400 1340 1430 1260 1460 1200 1490 1130 1510 1050 1525 1045 1560"
        strokeWidth="5"
      />
      <path d="M1030 1335 1090 1315" strokeWidth="3" />
    </g>
    <path d="M300 510 325 505 335 515 370 515 368 545 330 555 300 540ZM815 970 835 965 850 980 835 990 818 988ZM785 1130 800 1128 798 1138 785 1137Z" fill="#8fd3e8" />
    <g fill="none" stroke="#b5bacb" strokeWidth="4" strokeLinejoin="round">
      {minorRoads.map((p) => (
        <polyline key={p} points={p} />
      ))}
    </g>
    <g fill="none" strokeLinejoin="round" strokeLinecap="round">
      {majorRoads.map((p) => (
        <polyline key={p} points={p} stroke="#8595bc" strokeWidth="9.500" />
      ))}
      {majorRoads.map((p) => (
        <polyline key={p} points={p} stroke="#a1afd2" strokeWidth="5.500" />
      ))}
    </g>
    <path d={boundary} fill="none" stroke="#ea4335" strokeWidth="8" strokeDasharray="7 7" />
    {labels.map(([text, x, y, size, weight]) => (
      <text
        key={`${text}${y}`}
        x={x}
        y={y}
        fontSize={size}
        fontWeight={weight}
        textAnchor="middle"
        fill="#2f3338"
        stroke="#fff"
        strokeWidth="8"
        strokeLinejoin="round"
        paintOrder="stroke"
      >
        {text}
      </text>
    ))}
    <text transform="translate(1150 130) rotate(-84)" fontSize="50" fontWeight="700" fill="#0b8296">
      સાબરમતી
    </text>
    {stateShields.map(([n, x, y]) => {
      const w = n.length > 2 ? 38 : 33;
      return (
        <g key={`${n}-${x}`} transform={`translate(${x} ${y})`}>
          <path
            d={`M${-w + 2} -28Q${-w / 2} -34 0 -29Q${w / 2} -34 ${w - 2} -28L${w - 4} -14Q${w + 3} 2 ${w - 4} 18Q${w - 12} 25 12 23L0 29 -12 23Q${-w + 12} 25 ${-w + 4} 18Q${-w - 3} 2 ${-w + 4} -14Z`}
            fill="#fff"
            stroke="#5c6166"
            strokeWidth="3.500"
          />
          <path d={`M${-w + 2} -28Q${-w / 2} -33 0 -29Q${w / 2} -33 ${w - 2} -28L${w - 4} -14H${-w + 4}Z`} fill="#689f38" />
          <text y="14" fontSize="34" textAnchor="middle" fill="#333">
            {n}
          </text>
        </g>
      );
    })}
    {nationalShields.map(([n, x, y]) => (
      <g key={`${n}-${x}`} transform={`translate(${x} ${y})`}>
        <path d="M-29 -24Q-29 -28 -25 -28H25Q29 -28 29 -24V14Q29 19 24 21L0 29 -24 21Q-29 19 -29 14Z" fill="#fdd835" stroke="#e2a91a" strokeWidth="3" />
        <text y="13" fontSize="34" textAnchor="middle" fill="#333">
          {n}
        </text>
      </g>
    ))}
  </svg>
);

const AppMap = () => (
  <MapFrame>
    <CityMap />
    <PlaceCard>
      <PlaceName>Ahmedabad</PlaceName>
      <PlaceRegion>Gujarat</PlaceRegion>
      <PlaceLink>View larger map</PlaceLink>
    </PlaceCard>
    <SatelliteThumb />
    <ZoomControl>
      <svg width="22" height="22" viewBox="0 0 22 22">
        <path d="M0 11H22M11 0V22" stroke="#666" strokeWidth="5" />
      </svg>
      <ZoomRule />
      <svg width="22" height="22" viewBox="0 0 22 22">
        <path d="M0 11H22" stroke="#666" strokeWidth="5" />
      </svg>
    </ZoomControl>
  </MapFrame>
);

export default function App() {
  return (
    <Screen>
      <GlobalStyle />
      <TabStrip>
        <TabSearch>
          <MdKeyboardArrowDown size={22} />
        </TabSearch>
        {tabs.map((t, i) => (
          <TabBox key={i} $sep={!t.noSep}>
            {t.active && (
              <ActiveShape width="146" height="43" viewBox="0 0 146 43">
                <path d="M0 43Q15 43 15 30V13Q15 0 28 0H117Q130 0 130 13V30Q130 43 146 43Z" fill="#2c2c2c" />
              </ActiveShape>
            )}
            <TabIcon>{t.icon}</TabIcon>
            <TabTitle>{t.title}</TabTitle>
            <TabClose>
              <X size={15} strokeWidth={2.6} />
            </TabClose>
          </TabBox>
        ))}
        <NewTab>
          <Plus size={18} strokeWidth={2.6} />
        </NewTab>
        <WindowButtons>
          <WindowButton>
            <svg width="13" height="13" viewBox="0 0 13 13">
              <path d="M0 6.500H13" stroke="#fff" />
            </svg>
          </WindowButton>
          <WindowButton>
            <svg width="14" height="14" viewBox="0 0 14 14" fill="none" stroke="#fff">
              <rect x="0.500" y="3" width="10" height="10" rx="1.500" />
              <path d="M3 .8H11Q13 .8 13 3V11" />
            </svg>
          </WindowButton>
          <WindowButton>
            <svg width="14" height="14" viewBox="0 0 14 14">
              <path d="M.5.5 13.500 13.500M13.500.5.5 13.500" stroke="#fff" />
            </svg>
          </WindowButton>
        </WindowButtons>
      </TabStrip>

      <ToolbarWrap>
        <Toolbar>
          <NavButtons>
            <MdArrowBack size={22} />
            <MdArrowForward size={22} color="#757575" />
            <MdRefresh size={22} />
          </NavButtons>
          <Omnibox>
            <SiteInfo>
              <MdInfoOutline size={20} />
            </SiteInfo>
            <Url>
              <b>localhost</b>:4200/contact
            </Url>
            <MdStarBorder size={23} color="#c7c7c7" />
          </Omnibox>
          <Extensions>
            <ExtSlot $gap={24}>
              <CookieIcon />
            </ExtSlot>
            <ExtSlot $gap={23}>
              <GrammarlyIcon outlined />
            </ExtSlot>
            <ExtSlot $gap={20}>
              <PuzzleIcon />
            </ExtSlot>
            <Divider />
            <ExtSlot $gap={21}>
              <MdQueueMusic size={24} />
            </ExtSlot>
            <Avatar $size={25}>
              <Anchor size={17} strokeWidth={1.6} />
            </Avatar>
          </Extensions>
          <ErrorChip>
            Error
            <MdMoreVert size={24} />
          </ErrorChip>
        </Toolbar>
      </ToolbarWrap>

      <Viewport>
        <Page>
          <Navbar>
            <Brand>Contessa Global</Brand>
            {["Home", "Men", "Women", "About", "Contact"].map((l) => (
              <NavLink key={l}>{l}</NavLink>
            ))}
          </Navbar>
          <Content>
            {cards.map((c) => (
              <InfoCard key={c.title}>
                <CardTitle>{c.title}</CardTitle>
                {c.lines.map((l, i) => (
                  <p key={i}>{l}</p>
                ))}
              </InfoCard>
            ))}
            <FormCard>
              <FormTitle>Get In Touch</FormTitle>
              <Fields>
                <Input placeholder="Your Name" />
                <Input placeholder="Your Email" />
                <Input placeholder="Mobile" />
                <Input placeholder="City" />
                <Textarea placeholder="Write Your Message" />
              </Fields>
              <SendButton type="button">Send Now</SendButton>
            </FormCard>
            <AppMap />
          </Content>
        </Page>
        <Scrollbar>
          <ScrollArrow $up />
          <ScrollThumb />
          <ScrollArrow />
        </Scrollbar>
      </Viewport>

      <Taskbar>
        <WindowsIcon />
        <SearchPill>
          <Search size={18} strokeWidth={1.9} />
          Search
        </SearchPill>
        {apps.map((a, i) => (
          <AppSlot key={i} $active={a.active}>
            {a.icon}
            {a.badge && (
              <BadgeAvatar>
                <ProfileBadge />
              </BadgeAvatar>
            )}
            {a.run && <RunMark $active={a.active} />}
          </AppSlot>
        ))}
        <Tray>
          <ChevronUp size={19} strokeWidth={1.9} />
          <TrayIcons>
            <Wifi size={20} strokeWidth={1.8} />
            <Volume2 size={20} strokeWidth={1.5} />
            <BatteryIcon />
          </TrayIcons>
          <Clock>
            <span>11:20 PM</span>
            <span>9/5/2024</span>
          </Clock>
          <Bell>
            <BellIcon />
          </Bell>
          <CopilotIcon />
        </Tray>
      </Taskbar>
    </Screen>
  );
}
